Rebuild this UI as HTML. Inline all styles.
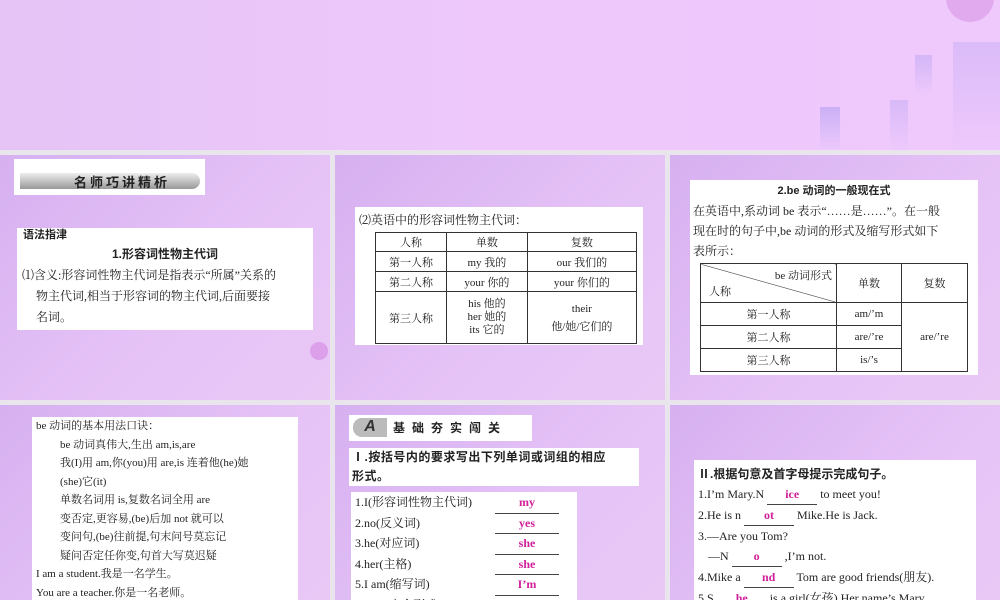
<!DOCTYPE html>
<html><head><meta charset="utf-8"><style>
body{margin:0;width:1000px;height:600px;overflow:hidden;background:#e9e5ec;font-family:"Liberation Serif","Noto Serif CJK SC",serif;color:#222;}
.top{position:absolute;left:0;top:0;width:1000px;height:150px;background:linear-gradient(90deg,#e6c4f6,#eec8fb 50%,#efc9fc);}
.p{position:absolute;background:linear-gradient(135deg,#d6b0f0,#e6c3f7 60%,#e9c8f6);overflow:hidden;}
.w{position:absolute;background:#fff;font-size:12px;}
.b{font-family:"Liberation Sans","Noto Sans CJK SC",sans-serif;font-weight:bold;}
table{border-collapse:collapse;font-size:11px;}
td{border:1px solid #333;text-align:center;padding:0;}
.ans{color:#d0209a;font-weight:bold;display:inline-block;border-bottom:1px solid #444;text-align:center;}
.bld{position:absolute;background:linear-gradient(180deg,#c2aaf4,#ecc8fb);}
.circ{position:absolute;border-radius:50%;background:#dca0ea;}
</style></head><body>
<div class="top">
<div class="circ" style="left:946px;top:-10px;width:48px;height:32px;border-radius:0 0 24px 24px;background:#e2aaee"></div>
<div class="bld" style="left:820px;top:107px;width:20px;height:43px;opacity:.8"></div>
<div class="bld" style="left:890px;top:100px;width:18px;height:50px;opacity:.5"></div>
<div class="bld" style="left:915px;top:55px;width:17px;height:40px;opacity:.6"></div>
<div class="bld" style="left:953px;top:42px;width:47px;height:108px;opacity:.45"></div>
</div>
<div class="p" style="left:0;top:155px;width:330px;height:245px">
<div style="position:absolute;left:14px;top:4px;width:191px;height:36px;background:#fff"><div style="position:absolute;left:6px;top:14px;width:180px;height:16px;background:linear-gradient(#eee,#999);border-radius:0 10px 10px 0"></div><div class="b" style="position:absolute;left:60px;top:13px;font-size:13px;letter-spacing:3px;color:#222">名师巧讲精析</div></div>
<div class="w" style="left:17px;top:73px;width:296px;height:102px;line-height:21px">
<div class="b" style="padding-left:6px;font-size:11px;margin-top:-3px">语法指津</div>
<div class="b" style="text-align:center;font-size:12px;margin-top:-2px">1.形容词性物主代词</div>
<div style="padding-left:5px">⑴含义:形容词性物主代词是指表示“所属”关系的</div>
<div style="padding-left:19px">物主代词,相当于形容词的物主代词,后面要接</div>
<div style="padding-left:19px">名词。</div></div>
<div class="circ" style="left:310px;top:187px;width:18px;height:18px"></div>
</div>
<div class="p" style="left:335px;top:155px;width:330px;height:245px">
<div class="w" style="left:20px;top:52px;width:288px;height:138px">
<div style="position:absolute;left:4px;top:4px">⑵英语中的形容词性物主代词：</div>
<table style="position:absolute;left:20px;top:25px;width:262px">
<tr style="height:19px"><td style="width:70px">人称</td><td>单数</td><td>复数</td></tr>
<tr style="height:20px"><td>第一人称</td><td>my 我的</td><td>our 我们的</td></tr>
<tr style="height:20px"><td>第二人称</td><td>your 你的</td><td>your 你们的</td></tr>
<tr style="height:52px"><td>第三人称</td><td style="line-height:13px">his 他的<br>her 她的<br>its 它的</td><td style="line-height:18px">their<br>他/她/它们的</td></tr>
</table></div></div>
<div class="p" style="left:670px;top:155px;width:330px;height:245px">
<div class="w" style="left:20px;top:25px;width:288px;height:195px;line-height:20px">
<div class="b" style="text-align:center;font-size:11px;margin-top:1px">2.be 动词的一般现在式</div>
<div style="padding-left:3px">在英语中,系动词 be 表示“……是……”。在一般<br>现在时的句子中,be 动词的形式及缩写形式如下<br>表所示：</div>
<table style="position:absolute;left:10px;top:83px;width:268px;line-height:normal">
<tr style="height:39px"><td style="width:135px;position:relative;background:linear-gradient(to top right,transparent 49.5%,#333 50%,transparent 51%)"><span style="position:absolute;right:4px;top:3px">be 动词形式</span><span style="position:absolute;left:8px;bottom:3px">人称</span></td><td style="width:64px">单数</td><td>复数</td></tr>
<tr style="height:23px"><td>第一人称</td><td>am/’m</td><td rowspan="3">are/’re</td></tr>
<tr style="height:23px"><td>第二人称</td><td>are/’re</td></tr>
<tr style="height:23px"><td>第三人称</td><td>is/’s</td></tr>
</table></div></div>
<div class="p" style="left:0;top:405px;width:330px;height:195px">
<div class="w" style="left:32px;top:12px;width:266px;height:190px;line-height:18.5px;font-size:11px">
<div style="padding-left:4px">be 动词的基本用法口诀：</div>
<div style="padding-left:28px">be 动词真伟大,生出 am,is,are<br>我(I)用 am,你(you)用 are,is 连着他(he)她<br>(she)它(it)<br>单数名词用 is,复数名词全用 are<br>变否定,更容易,(be)后加 not 就可以<br>变问句,(be)往前提,句末问号莫忘记<br>疑问否定任你变,句首大写莫迟疑</div>
<div style="padding-left:4px">I am a student.我是一名学生。<br>You are a teacher.你是一名老师。</div></div></div>
<div class="p" style="left:335px;top:405px;width:330px;height:195px">
<div style="position:absolute;left:14px;top:10px;width:183px;height:26px;background:#fff"><div class="b" style="position:absolute;left:4px;top:3px;width:34px;height:19px;background:#bbb;border-radius:9px 0 0 9px;font-style:italic;text-align:center;color:#333">A</div><div class="b" style="position:absolute;left:44px;top:4px;letter-spacing:7px;font-size:12px">基础夯实闯关</div></div>
<div class="w b" style="left:14px;top:43px;width:287px;height:38px;line-height:19px;font-size:12px;padding-left:3px;letter-spacing:.5px">Ⅰ.按括号内的要求写出下列单词或词组的相应<br>形式。</div>
<div class="w" style="left:16px;top:87px;width:226px;height:110px;line-height:20.5px">
<div style="padding-left:4px">1.I(形容词性物主代词) <span class="ans" style="position:absolute;left:144px;width:64px">my</span></div>
<div style="padding-left:4px">2.no(反义词) <span class="ans" style="position:absolute;left:144px;width:64px">yes</span></div>
<div style="padding-left:4px">3.he(对应词) <span class="ans" style="position:absolute;left:144px;width:64px">she</span></div>
<div style="padding-left:4px">4.her(主格) <span class="ans" style="position:absolute;left:144px;width:64px">she</span></div>
<div style="padding-left:4px">5.I am(缩写词) <span class="ans" style="position:absolute;left:144px;width:64px">I’m</span></div>
<div style="padding-left:4px">6.isn’t(完全形式)</div></div></div>
<div class="p" style="left:670px;top:405px;width:330px;height:195px">
<div class="w" style="left:24px;top:55px;width:282px;height:150px;line-height:20px;font-size:12px">
<div class="b" style="padding-left:4px;font-size:12px;margin-top:4px">Ⅱ.根据句意及首字母提示完成句子。</div>
<div style="padding-left:4px">1.I’m Mary.N <span class="ans" style="width:50px">ice</span> to meet you!</div>
<div style="padding-left:4px">2.He is n <span class="ans" style="width:50px">ot</span> Mike.He is Jack.</div>
<div style="padding-left:4px">3.—Are you Tom?</div>
<div style="padding-left:14px">—N <span class="ans" style="width:50px">o</span> ,I’m not.</div>
<div style="padding-left:4px">4.Mike a <span class="ans" style="width:50px">nd</span> Tom are good friends(朋友).</div>
<div style="padding-left:4px">5.S <span class="ans" style="width:50px">he</span> is a girl(女孩).Her name’s Mary.</div></div></div>
</body></html>
